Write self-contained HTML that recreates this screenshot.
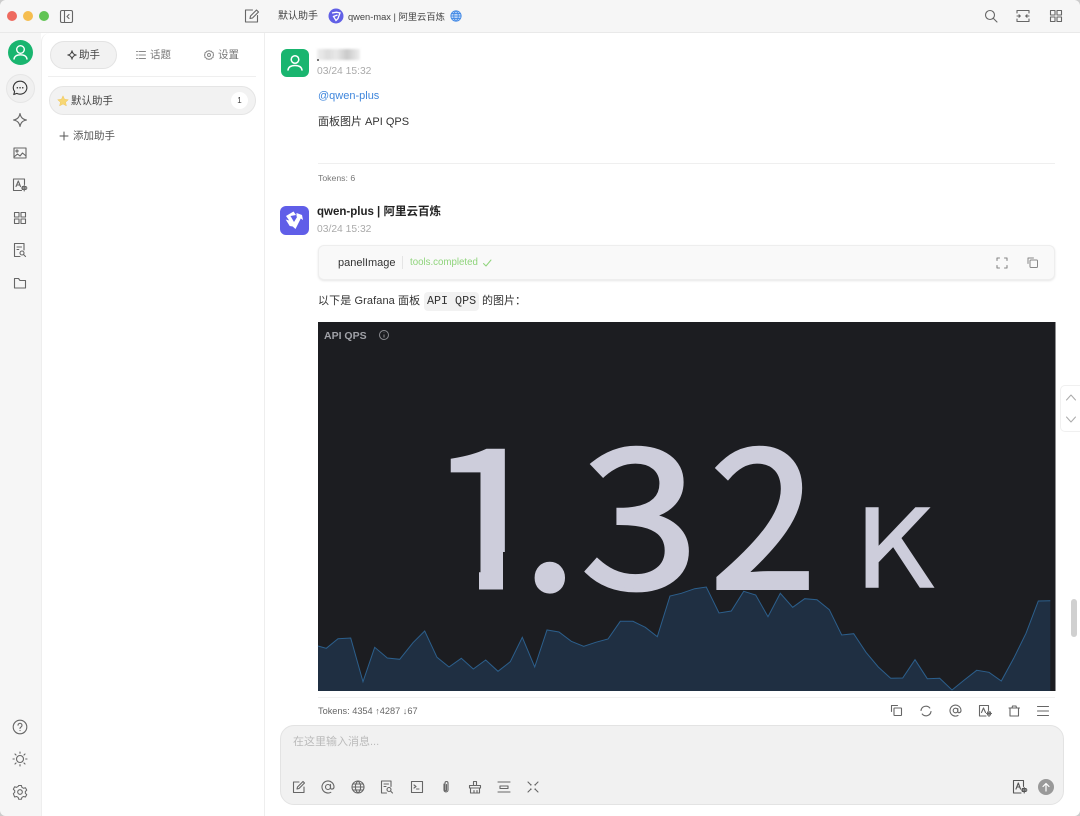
<!DOCTYPE html>
<html lang="zh"><head><meta charset="utf-8"><title>Chat</title>
<style>
html,body{margin:0;padding:0;width:1080px;height:816px;overflow:hidden;background:#fff}
body{position:relative;font-family:"Liberation Sans","Noto Sans CJK SC",sans-serif;color:#333}
div,span{box-sizing:border-box}
.a{position:absolute}
.t{position:absolute;white-space:nowrap;line-height:20px;height:20px}
svg.i{position:absolute;fill:none;stroke:#666;stroke-width:1.1;stroke-linecap:round;stroke-linejoin:round}
</style></head><body>
<div class="a" style="left:0;top:0;width:1080px;height:33px;background:#f6f6f6;border-bottom:1px solid #e9e9e9"></div>
<div class="a" style="left:0;top:33px;width:41px;height:783px;background:#f6f6f6"></div>
<div class="a" style="left:41px;top:33px;width:224px;height:783px;background:#fff;border-left:1px solid #eee;border-right:1px solid #eee;border-top-left-radius:9px"></div>

<svg class="a" width="1080" height="816" style="left:0;top:0;pointer-events:none"><path d="M0 5V0H5A6 6 0 0 0 0 5ZM1080 5V0H1075A6 6 0 0 1 1080 5ZM0 811V816H5A6 6 0 0 1 0 811ZM1080 811V816H1075A6 6 0 0 0 1080 811Z" fill="#ccc"/></svg>

<div class="a" style="left:7px;top:11px;width:10px;height:10px;border-radius:50%;background:#ee6a5f"></div>
<div class="a" style="left:23px;top:11px;width:10px;height:10px;border-radius:50%;background:#f5bd4f"></div>
<div class="a" style="left:39px;top:11px;width:10px;height:10px;border-radius:50%;background:#61c454"></div>
<svg class="i" style="left:59px;top:9px" width="15" height="15" viewBox="0 0 15 15"><rect x="1.5" y="1.5" width="12" height="12" rx="1.5"/><path d="M5.5 1.5v12M10 5.5L8 7.5l2 2"/></svg>
<svg class="i" style="left:244px;top:8px" width="16" height="16" viewBox="0 0 16 16"><path d="M13.5 7.5v6.5h-12V2h7"/><path d="M6 10.5l.5-2.5L12.5 2l2 2-6 6z"/></svg>
<span class="t" style="left:278px;top:7px;font-size:10px;color:#444">默认助手</span>
<svg class="a" style="left:328px;top:8px" width="16" height="16" viewBox="0 0 16 16"><circle cx="8" cy="8" r="7.5" fill="#6160e6"/><path d="M4 5l4.5-.8L12 5 10 10.500 8 12.500 5.500 8.500 9.500 7" fill="none" stroke="#fff" stroke-width="1.300"/></svg>
<span class="t" style="left:348px;top:7px;font-size:9.300px;color:#444">qwen-max | 阿里云百炼</span>
<svg class="i" style="left:450px;top:10px;stroke:#3f87e5;fill:#bcd6f7;stroke-width:1" width="12" height="12" viewBox="0 0 14 14"><circle cx="7" cy="7" r="6"/><path d="M1 7h12M2 4h10M2 10h10M7 1c-3.500 3-3.500 9 0 12M7 1c3.500 3 3.500 9 0 12"/></svg>
<svg class="i" style="left:984px;top:9px" width="14" height="14" viewBox="0 0 14 14"><circle cx="6" cy="6" r="4.500"/><path d="M9.500 9.500L13 13"/></svg>
<svg class="i" style="left:1016px;top:9px" width="14" height="14" viewBox="0 0 14 14"><path d="M1 4V1.500h12V4M1 10v2.500h12V10M1 7h3M3 5.800L4.300 7 3 8.200M13 7h-3M11 5.800L9.700 7 11 8.200"/></svg>
<svg class="i" style="left:1049px;top:9px" width="14" height="14" viewBox="0 0 14 14"><rect x="1.500" y="1.500" width="4.500" height="4.500"/><rect x="8" y="1.500" width="4.500" height="4.500"/><rect x="1.500" y="8" width="4.500" height="4.500"/><rect x="8" y="8" width="4.500" height="4.500"/></svg>

<svg class="a" style="left:8px;top:40px" width="25" height="25" viewBox="0 0 25 25"><circle cx="12.500" cy="12.500" r="12.500" fill="#19b56f"/><circle cx="12.500" cy="9.500" r="3.800" fill="none" stroke="#fff" stroke-width="1.400"/><path d="M6 19c.5-3 3-4.200 6.500-4.200S18.500 16 19 19" fill="none" stroke="#fff" stroke-width="1.400" stroke-linecap="round"/></svg>
<div class="a" style="left:6px;top:74px;width:29px;height:29px;border-radius:50%;background:#f0f0f0;border:1px solid #e6e6e6"></div>
<svg class="i" style="left:12px;top:80px;stroke:#333" width="16" height="16" viewBox="0 0 16 16"><path d="M8 1.200a6.800 6.500 0 1 1-3.200 12.200L1.800 14.500l.8-3A6.800 6.500 0 0 1 8 1.200z"/><path d="M5.300 7.800h.1M8 7.800h.1M10.700 7.800h.1" stroke-width="1.500"/></svg>
<svg class="i" style="left:12px;top:112px" width="16" height="16" viewBox="0 0 16 16"><path d="M8 1.500C8.800 5.500 10.500 7.200 14.500 8 10.500 8.800 8.800 10.500 8 14.500 7.200 10.500 5.500 8.800 1.500 8 5.500 7.200 7.200 5.500 8 1.500z"/></svg>
<svg class="i" style="left:13px;top:146px" width="14" height="14" viewBox="0 0 14 14"><rect x="1" y="2" width="12" height="10"/><circle cx="4" cy="5" r="1"/><path d="M1 11l3.500-3L7 10l2.500-3L13 10"/></svg>
<svg class="i" style="left:12px;top:177px" width="16" height="16" viewBox="0 0 16 16"><path d="M9.500 13.500H1.500V2h11v5.500"/><path d="M4 9.500L6.300 4l2.200 5.500M5 8h2.500M9.500 11h5.500M12.200 8.500v5.500M10.300 9.500h3.800v3h-3.800z"/></svg>
<svg class="i" style="left:13px;top:211px" width="14" height="14" viewBox="0 0 14 14"><rect x="1.500" y="1.500" width="4.500" height="4.500"/><rect x="8" y="1.500" width="4.500" height="4.500"/><rect x="1.500" y="8" width="4.500" height="4.500"/><rect x="8" y="8" width="4.500" height="4.500"/></svg>
<svg class="i" style="left:12px;top:242px" width="16" height="16" viewBox="0 0 16 16"><path d="M8 14.500H2.500V1.500h9.500v6.500M5 5h4.500M5 7.500h1.800"/><circle cx="10" cy="11" r="2"/><path d="M11.500 12.500l2 2"/></svg>
<svg class="i" style="left:13px;top:276px" width="14" height="14" viewBox="0 0 14 14"><path d="M1.500 2.500h4l1.500 2h5.500v7.500h-11z"/></svg>
<svg class="i" style="left:12px;top:719px" width="16" height="16" viewBox="0 0 16 16"><circle cx="8" cy="8" r="6.800"/><path d="M6 6.200a2 2 0 1 1 3 1.800c-.7.400-1 .8-1 1.500M8 11.600h.1"/></svg>
<svg class="i" style="left:12px;top:751px" width="16" height="16" viewBox="0 0 16 16"><circle cx="8" cy="8" r="3.500"/><path d="M8 1v1.300M8 13.700V15M1 8h1.300M13.700 8H15M3 3l1 1M12 12l1 1M3 13l1-1M12 4l1-1"/></svg>
<svg class="i" style="left:12px;top:784px" width="16" height="16" viewBox="0 0 16 16"><path d="M6.500 1.500h3l.5 2 1.800 1 2-.6 1.400 2.600-1.500 1.500v1.800l1.500 1.500-1.400 2.600-2-.6-1.800 1-.5 2h-3l-.5-2-1.800-1-2 .6L.8 10.300l1.500-1.500V7L.8 5.500l1.400-2.600 2 .6L6 2.500z" transform="translate(.6 .1) scale(.93)"/><circle cx="8" cy="8" r="2.300"/></svg>

<div class="a" style="left:50px;top:41px;width:67px;height:28px;border-radius:14px;background:#f2f2f2;border:1px solid #e3e3e3"></div>
<svg class="i" style="left:67px;top:50px;stroke:#444" width="10" height="10" viewBox="0 0 10 10"><path d="M5 .8C5.400 3.200 6.800 4.600 9.200 5 6.800 5.400 5.400 6.800 5 9.200 4.600 6.800 3.200 5.400 .8 5 3.200 4.600 4.600 3.200 5 .8z"/></svg>
<span class="t" style="left:79px;top:45px;font-size:10.500px;color:#444">助手</span>
<svg class="i" style="left:136px;top:50px;stroke:#888;stroke-width:1" width="10" height="10" viewBox="0 0 10 10"><path d="M.5 1.500h1M.5 5h1M.5 8.500h1M3 1.500h6.500M3 5h6.500M3 8.500h6.500"/></svg>
<span class="t" style="left:150px;top:45px;font-size:10.500px;color:#777">话题</span>
<svg class="i" style="left:204px;top:50px;stroke:#888;stroke-width:1" width="10" height="10" viewBox="0 0 10 10"><path d="M5 .6l1 .6 1.300-.1.700 1.100 1.200.6v1.300l.4 1-.6 1 .1 1.200-1.200.6L7.200 9 6 8.900 5 9.500 4 8.900 2.800 9l-.7-1.100L.9 7.300l.1-1.200-.6-1 .6-1V2.800L2.200 2.200 2.900 1.100 4 1.200z"/><circle cx="5" cy="5" r="1.500"/></svg>
<span class="t" style="left:218px;top:45px;font-size:10.500px;color:#777">设置</span>
<div class="a" style="left:48px;top:76px;width:208px;height:1px;background:#efefef"></div>
<div class="a" style="left:49px;top:86px;width:207px;height:29px;border-radius:14.500px;background:#f2f2f2;border:1px solid #e5e5e5"></div>
<svg class="a" style="left:57px;top:95px" width="12" height="12" viewBox="0 0 12 12"><path d="M6 .8l1.600 3.500 3.800.4-2.800 2.500.8 3.700L6 9l-3.400 1.900.8-3.700L.6 4.700l3.800-.4z" fill="#f7d774" stroke="#eebf4d" stroke-width=".4"/></svg>
<span class="t" style="left:71px;top:91px;font-size:10.500px;color:#444">默认助手</span>
<div class="a" style="left:231px;top:92px;width:17px;height:17px;border-radius:50%;background:#fff;font-size:8px;line-height:17px;text-align:center;color:#444">1</div>
<svg class="i" style="left:59px;top:131px;stroke:#555;stroke-width:1" width="10" height="10" viewBox="0 0 10 10"><path d="M5 1v8M1 5h8"/></svg>
<span class="t" style="left:73px;top:126px;font-size:10.500px;color:#555">添加助手</span>

<svg class="a" style="left:281px;top:49px" width="28" height="28" viewBox="0 0 28 28"><rect width="28" height="28" rx="6" fill="#19b56f"/><circle cx="14" cy="10.500" r="3.800" fill="none" stroke="#fff" stroke-width="1.500"/><path d="M7 21c.5-3.200 3-4.500 7-4.500s6.500 1.300 7 4.500" fill="none" stroke="#fff" stroke-width="1.500" stroke-linecap="round"/></svg>
<div class="a" style="left:317px;top:49px;width:43px;height:11px;background:linear-gradient(90deg,#efefef,#dcdcdc 25%,#e8e8e8 45%,#c9c9c9 70%,#efefef);filter:blur(1px)"></div>
<div class="a" style="left:317px;top:59px;width:2px;height:2px;background:#777"></div>
<span class="t" style="left:317px;top:62px;font-size:10.300px;color:#aaa">03/24 15:32</span>
<span class="t" style="left:318px;top:86px;font-size:11px;color:#3f86dc">@qwen-plus</span>
<span class="t" style="left:318px;top:112px;font-size:11px;color:#333">面板图片 API QPS</span>
<div class="a" style="left:318px;top:163px;width:737px;height:1px;background:#efefef"></div>
<span class="t" style="left:318px;top:168px;font-size:8.700px;color:#777">Tokens: 6</span>

<svg class="a" style="left:280px;top:206px" width="29" height="29" viewBox="0 0 29 29"><rect width="29" height="29" rx="6" fill="#605ee8"/><path d="M6 10l7.500-4.500 2.500 3.500-5.500 1 3.500 6 4-6.500 4 .5-6.500 13-2.800-2.500-3-.5-4-6.500 3.500 1z" fill="#fff"/><path d="M16.500 7l5.500 2 1 5-3-2-3.500-1.500z" fill="#fff"/></svg>
<span class="t" style="left:317px;top:202px;font-size:11.500px;font-weight:bold;color:#222">qwen-plus | 阿里云百炼</span>
<span class="t" style="left:317px;top:220px;font-size:10.300px;color:#aaa">03/24 15:32</span>
<div class="a" style="left:318px;top:245px;width:737px;height:35px;border-radius:6px;background:#f9f9f9;border:1px solid #eee;box-shadow:0 1px 2px rgba(0,0,0,.1)"></div>
<span class="t" style="left:338px;top:253px;font-size:11px;color:#333">panelImage</span>
<div class="a" style="left:402px;top:256px;width:1px;height:13px;background:#e5e5e5"></div>
<span class="t" style="left:410px;top:253px;font-size:9.700px;color:#8fd47b">tools.completed</span>
<svg class="i" style="left:482px;top:258px;stroke:#8fd47b;stroke-width:1" width="10" height="10" viewBox="0 0 10 10"><path d="M1.500 5.500L4 8l5-6"/></svg>
<svg class="i" style="left:996px;top:257px;stroke-width:1.100;stroke:#888" width="12" height="12" viewBox="0 0 12 12"><path d="M1 3.500V1h2.500M8.500 1H11v2.500M11 8.500V11H8.500M3.500 11H1V8.500"/></svg>
<svg class="i" style="left:1026px;top:256px;stroke-width:1;stroke:#888" width="13" height="13" viewBox="0 0 13 13"><rect x="4" y="4" width="7.500" height="7.500" rx="1"/><path d="M7.500 2H2v5.500"/></svg>
<span class="t" style="left:318px;top:291px;font-size:11px;letter-spacing:.1px;color:#333">以下是 Grafana 面板</span>
<div class="a" style="left:424px;top:292px;width:55px;height:19px;background:#f2f2f2;border-radius:4px"></div>
<span class="t" style="left:427px;top:291px;font-size:11.700px;font-family:'Liberation Mono','Noto Sans CJK SC',monospace;color:#333">API QPS</span>
<span class="t" style="left:482px;top:291px;font-size:11px;color:#333">的图片：</span>

<svg class="a" style="left:0;top:0" width="1080" height="816">
<rect x="318" y="322" width="737.500" height="369" fill="#1c1d21"/>
<path d="M318 646 326.300 648.300 338 638.700 350.700 638 363 681.700 374.700 647.300 387.300 658 399.700 659.300 413 642.700 424.700 631 437 657.300 449 667 461.300 658.300 473.300 669 485.700 660 498 671.300 510.300 661.700 522.300 637.300 534.700 667 547 630 559 632 571.300 641.300 583.700 646.300 595.700 642.300 608 639 620.300 621.300 633 621.300 645.300 627.300 657.300 636.700 670 596 681.300 593.300 694.700 588.700 706.300 587 719 613 731.300 611 743.700 591.300 755.700 595 768 616.700 780.300 593.300 792.700 607.300 804.700 598.700 817 599.700 829.300 609.700 841.700 635 853.700 633.700 866 652.300 878.300 667 890.700 678.300 902.700 678 915 659.700 927.300 678.700 939.700 678.300 952 690 964.300 680 976.700 670.300 989 672.300 1001.300 681 1013.700 658.300 1026 633.300 1038.300 601 1050.300 600.700V691H318Z" fill="#1f2f42" stroke="none"/>
<path d="M318 646 326.300 648.300 338 638.700 350.700 638 363 681.700 374.700 647.300 387.300 658 399.700 659.300 413 642.700 424.700 631 437 657.300 449 667 461.300 658.300 473.300 669 485.700 660 498 671.300 510.300 661.700 522.300 637.300 534.700 667 547 630 559 632 571.300 641.300 583.700 646.300 595.700 642.300 608 639 620.300 621.300 633 621.300 645.300 627.300 657.300 636.700 670 596 681.300 593.300 694.700 588.700 706.300 587 719 613 731.300 611 743.700 591.300 755.700 595 768 616.700 780.300 593.300 792.700 607.300 804.700 598.700 817 599.700 829.300 609.700 841.700 635 853.700 633.700 866 652.300 878.300 667 890.700 678.300 902.700 678 915 659.700 927.300 678.700 939.700 678.300 952 690 964.300 680 976.700 670.300 989 672.300 1001.300 681 1013.700 658.300 1026 633.300 1038.300 601 1050.300 600.700" fill="none" stroke="#2c5f8c" stroke-width="1"/>
<g font-family="'Noto Sans CJK SC',sans-serif" fill="#cdcddb" stroke="#cdcddb">
<text transform="translate(425 588) scale(1.21 1)" font-size="188" stroke-width="3">1</text>
<rect x="430" y="552" width="49" height="68" fill="#1c1d21" stroke="none"/>
<rect x="503" y="552" width="52" height="68" fill="#1c1d21" stroke="none"/>
<rect x="478" y="591.500" width="26" height="28" fill="#1c1d21" stroke="none"/>
<text transform="translate(522 589)" font-size="200" stroke-width="4">.</text>
<text transform="translate(581 588) scale(1.126 1)" font-size="188" stroke-width="4">3</text>
<text transform="translate(710 588) scale(1.02 1)" font-size="188" stroke-width="4">2</text>
<text transform="translate(854 587) scale(1.14 1)" font-size="108" stroke-width="1.500">K</text>
</g>
<text x="324" y="339" font-family="'Liberation Sans',sans-serif" font-size="10.500" font-weight="bold" fill="#a0a1a7">API QPS</text>
<circle cx="384" cy="335" r="4.500" fill="none" stroke="#8a8b90"/><path d="M384 334.500v3M384 332.600v.4" stroke="#8a8b90"/>
</svg>

<div class="a" style="left:1060px;top:385px;width:20px;height:47px;background:#fff;border:1px solid #f0f0f0;border-right:none;border-radius:5px 0 0 5px"></div>
<svg class="i" style="left:1065px;top:391px;stroke:#aaa;stroke-width:1" width="12" height="36" viewBox="0 0 12 36"><path d="M1.500 9L6 4l4.500 5M1.500 26L6 31l4.500-5"/></svg>
<div class="a" style="left:1071px;top:599px;width:6px;height:38px;background:#d0d0d0;border-radius:3px"></div>

<div class="a" style="left:318px;top:697px;width:737px;height:1px;background:#f2f2f2"></div>
<span class="t" style="left:318px;top:701px;font-size:9.200px;color:#666">Tokens: 4354 ↑4287 ↓67</span>
<svg class="i" style="left:890px;top:704px" width="13" height="13" viewBox="0 0 13 13"><rect x="4" y="4" width="7.500" height="7.500" rx=".5"/><path d="M7.500 1.500H1.500v6"/></svg>
<svg class="i" style="left:920px;top:705px" width="12" height="12" viewBox="0 0 12 12"><path d="M1 5.500A5 5 0 0 1 9.800 3M11 6.500A5 5 0 0 1 2.200 9"/></svg>
<svg class="i" style="left:949px;top:704px" width="13" height="13" viewBox="0 0 13 13"><circle cx="6.500" cy="6.500" r="2.300"/><path d="M8.800 4.500v3c0 2 3.200 1.500 3.200-1A5.500 5.500 0 1 0 9 11.500"/></svg>
<svg class="i" style="left:978px;top:704px" width="14" height="14" viewBox="0 0 14 14"><path d="M8 12H1.500V1.500h9v5"/><path d="M3.500 8.500L5.500 4l2 4.500M8.500 9.500h5M11 7.500v5M9.500 8h3v3h-3z"/></svg>
<svg class="i" style="left:1008px;top:705px" width="12" height="12" viewBox="0 0 12 12"><path d="M2 3h8.500v8H2zM1 3h10.500M4 3l.5-2h3.500l.5 2"/></svg>
<svg class="i" style="left:1037px;top:705px" width="12" height="12" viewBox="0 0 12 12"><path d="M.5 1.500h11M.5 6h11M.5 10.500h11"/></svg>

<div class="a" style="left:280px;top:725px;width:784px;height:80px;border-radius:14px;background:#f1f1f1;border:1px solid #e3e3e3"></div>
<span class="t" style="left:293px;top:732px;font-size:11px;color:#bbb">在这里输入消息...</span>
<svg class="i" style="left:292px;top:780px" width="14" height="14" viewBox="0 0 14 14"><path d="M12 7v5.500H1.500V2H7"/><path d="M5 9l.5-2L11 1.500l1.500 1.500L7 8.500z"/></svg>
<svg class="i" style="left:321px;top:780px" width="14" height="14" viewBox="0 0 14 14"><circle cx="7" cy="7" r="2.500"/><path d="M9.500 4.500v3.300c0 2 3.500 1.700 3.500-.8A6 6 0 1 0 9.800 12.300"/></svg>
<svg class="i" style="left:351px;top:780px" width="14" height="14" viewBox="0 0 14 14"><circle cx="7" cy="7" r="6"/><path d="M1 7h12M2 4h10M2 10h10M7 1c-3.500 3-3.500 9 0 12M7 1c3.500 3 3.500 9 0 12"/></svg>
<svg class="i" style="left:380px;top:780px" width="14" height="14" viewBox="0 0 14 14"><path d="M6.500 13H1.500V1h9.500v5.500M4 4h4.500M4 6.500h2"/><circle cx="9" cy="9.500" r="2"/><path d="M10.500 11l2 2"/></svg>
<svg class="i" style="left:410px;top:780px" width="14" height="14" viewBox="0 0 14 14"><rect x="1.500" y="1.500" width="11" height="11"/><path d="M4 5l2 1.500L4 8M6.500 9h2.500"/></svg>
<svg class="i" style="left:439px;top:780px" width="14" height="14" viewBox="0 0 14 14"><path d="M5 4v6a2 2 0 0 0 4 0V3a1.500 1.500 0 0 0-3 0v7a.7.7 0 0 0 1.500 0V4.500"/></svg>
<svg class="i" style="left:468px;top:780px" width="14" height="14" viewBox="0 0 14 14"><path d="M5.500 5.500V1.500h3v4M1.500 5.500h11V8h-11zM2.500 8v5h9V8M6 13v-2.500M9 13v-2.500"/></svg>
<svg class="i" style="left:497px;top:780px" width="14" height="14" viewBox="0 0 14 14"><path d="M1 2h12M1 12h12M3 6h8v2.500H3z"/></svg>
<svg class="i" style="left:526px;top:780px" width="14" height="14" viewBox="0 0 14 14"><path d="M2 2l3 3M12 2L9 5M2 12l3-3M12 12L9 9M5 4.500v.5h-.5M9 4.500v.5h.5M5 9.500V9h-.5M9 9.500V9h.5"/></svg>
<svg class="i" style="left:1012px;top:779px;stroke:#555" width="16" height="16" viewBox="0 0 16 16"><path d="M9 14H1.500V1.500h10v6"/><path d="M4 10L6.300 4l2.200 6M5 8h2.500M9.500 11h5.500M12.200 8.500v5.500M10.300 9.500h3.800v3h-3.800z"/></svg>
<div class="a" style="left:1038px;top:779px;width:16px;height:16px;border-radius:50%;background:#999"></div>
<svg class="i" style="left:1041px;top:782px;stroke:#fff;stroke-width:1.200" width="10" height="10" viewBox="0 0 10 10"><path d="M5 9V1.500M2 4.500l3-3 3 3"/></svg>
</body></html>
